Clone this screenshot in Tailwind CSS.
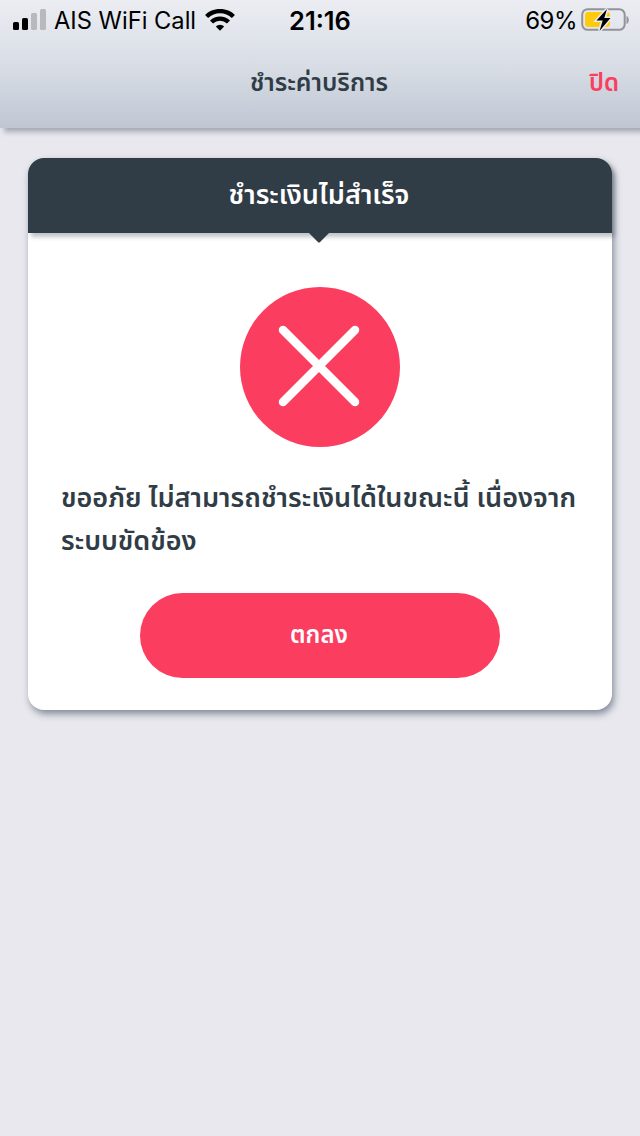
<!DOCTYPE html>
<html lang="th">
<head>
  <meta charset="UTF-8">
  <meta name="viewport" content="width=device-width, initial-scale=1.0">
  <title>ชำระค่าบริการ</title>
  <script src="https://cdn.jsdelivr.net/npm/@tailwindcss/browser@4"></script>
</head>
<body class="bg-[#e8e8ee] font-['Noto_Sans','Noto_Sans_Thai',sans-serif] text-[#303c46]">
  <div class="flex flex-col h-[1136px] overflow-hidden">
    <!-- Header -->
    <header class="h-32 shrink-0 bg-linear-to-b from-[#ebedf2] via-[#d9dee6] to-[#bfc7d3] shadow-[4px_4px_5px_rgba(70,75,90,0.4)]">
      <!-- Status bar -->
      <div class="grid grid-cols-3 h-10 items-center text-black font-[Inter,sans-serif]">
        <div class="flex items-center pl-[13px]">
          <svg class="w-[33px] h-[22px] shrink-0" viewBox="0 0 33 22">
            <rect x="0" y="13" width="6" height="8" rx="1.5"/>
            <rect x="9" y="9" width="6" height="12" rx="1.5"/>
            <rect x="18" y="4" width="6" height="17" rx="1.5" fill="#b7b9bf"/>
            <rect x="27" y="0" width="6" height="21" rx="1.5" fill="#b7b9bf"/>
          </svg>
          <span class="ml-2 pt-0.5 w-[143px] shrink-0 text-[23.7px] whitespace-nowrap">AIS WiFi Call</span>
          <svg class="w-[30px] h-[22px] ml-2 shrink-0" viewBox="0 0 30 22" fill="none" stroke="#000" stroke-width="4.4">
            <path d="M1.6 7.5a19.3 19.3 0 0 1 26.800 0"/>
            <path d="M6.500 13a12.3 12.3 0 0 1 17 0"/>
            <path d="M15 21.8l-4.2-4.3a6 6 0 0 1 8.4 0z" fill="#000" stroke="none"/>
          </svg>
        </div>
        <div class="pt-0.5 text-center text-[25.5px] font-semibold">21:16</div>
        <div class="flex items-center justify-end pr-[11px]">
          <span class="pt-0.5 text-2xl tracking-[-0.5px]">69%</span>
          <svg class="w-[48px] h-[26px] ml-1 shrink-0" viewBox="0 0 48 26">
            <rect x="1.2" y="2.2" width="42.500" height="20.600" rx="5.500" fill="none" stroke="#929399" stroke-width="2"/>
            <path d="M45.500 9c3 1 3 7 0 8z" fill="#929399"/>
            <rect x="4" y="5" width="25" height="15" rx="3" fill="#fdcb0b"/>
            <path d="M26 2L15.500 13.500h6.200L18.500 24 29.500 11h-6.200z" fill="#000" stroke="#e9ebf0" stroke-width="3" paint-order="stroke"/>
          </svg>
        </div>
      </div>
      <!-- Nav bar -->
      <div class="grid grid-cols-3 h-[84px] items-center text-2xl font-semibold">
        <div></div>
        <h1 class="pr-0.5 text-center text-[24.7px] whitespace-nowrap">ชำระค่าบริการ</h1>
        <a href="#" class="text-right pr-[21px] text-[#fb3e60]">ปิด</a>
      </div>
    </header>

    <!-- Payment result -->
    <main class="mt-[30px] mx-7 h-[552px] rounded-2xl bg-white shadow-[2px_4px_7px_rgba(50,65,85,0.55)]">
      <div class="relative h-[75px] flex items-center justify-center pb-[3px] pr-0.5 rounded-t-2xl bg-[#303c46] text-white shadow-[3px_4px_4px_rgba(48,60,70,0.3)]">
        <h2 class="text-[27px] font-semibold whitespace-nowrap">ชำระเงินไม่สำเร็จ</h2>
        <svg class="absolute left-[280px] top-[74px] w-[22px] h-[11px]" viewBox="0 0 20 10"><path d="M0 0h20l-9 9q-1 1-2 0z" fill="#303c46"/></svg>
      </div>
      <svg class="w-40 h-40 mx-auto mt-[54px]" viewBox="0 0 160 160">
        <circle cx="80" cy="80" r="80" fill="#fb3e60"/>
        <path d="M43 43l72 72M115 43l-72 72" stroke="#fff" stroke-width="8.500" stroke-linecap="round"/>
      </svg>
      <p class="mt-7 ml-[33px] h-[86px] text-[27px] leading-[43px] font-semibold whitespace-nowrap">ขออภัย ไม่สามารถชำระเงินได้ในขณะนี้ เนื่องจาก<br>ระบบขัดข้อง</p>
      <button class="block mx-auto mt-8 w-[360px] h-[85px] pb-[3px] pr-0.5 rounded-full bg-[#fb3e60] text-white text-2xl font-semibold">ตกลง</button>
    </main>
  </div>
</body>
</html>
